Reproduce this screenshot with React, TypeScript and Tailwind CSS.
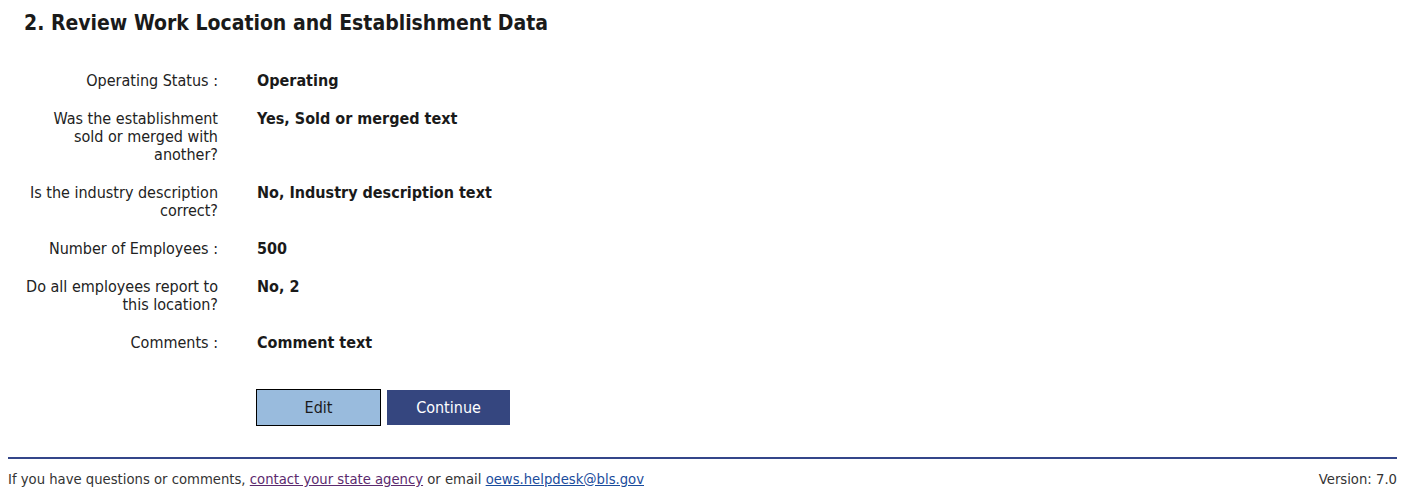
import React from 'react';

const font = { fontFamily: 'Tahoma, "DejaVu Sans Condensed", "Liberation Sans", sans-serif' };

type Row = { label: React.ReactNode; value: string };

const rows: Row[] = [
  { label: 'Operating Status :', value: 'Operating' },
  {
    label: (
      <>
        Was the establishment
        <br />
        sold or merged with
        <br />
        another?
      </>
    ),
    value: 'Yes, Sold or merged text',
  },
  {
    label: (
      <>
        Is the industry description
        <br />
        correct?
      </>
    ),
    value: 'No, Industry description text',
  },
  { label: 'Number of Employees :', value: '500' },
  {
    label: (
      <>
        Do all employees report to
        <br />
        this location?
      </>
    ),
    value: 'No, 2',
  },
  { label: 'Comments :', value: 'Comment text' },
];

const App = () => {
  return (
    <div className="min-h-screen bg-white text-[#222]" style={font}>
      <div className="px-[24px] pt-[11px]">
        <h2 className="text-[21px] leading-[24px] font-bold text-[#1a1a1a]">
          2. Review Work Location and Establishment Data
        </h2>

        <div className="mt-[37px] flex flex-col gap-[20px]">
          {rows.map((r, i) => (
            <div key={i} className="flex text-[16px] leading-[18px]">
              <div className="w-[194px] text-right whitespace-nowrap text-[#222]">{r.label}</div>
              <div className="ml-[39px] font-bold text-[#1a1a1a]">{r.value}</div>
            </div>
          ))}
        </div>

        <div className="mt-[37px] ml-[232px] flex items-center gap-[6px]">
          <button className="w-[125px] h-[37px] bg-[#99bbdd] border border-black text-[16px] text-[#1a1a1a]">
            Edit
          </button>
          <button className="w-[123px] h-[35px] bg-[#35467f] text-[16px] text-white">
            Continue
          </button>
        </div>
      </div>

      <div className="px-2 mt-[31px]">
        <div className="h-[2px] bg-[#34468a]" />
        <div className="flex justify-between items-center text-[14.7px] leading-[16px] pt-[12px] text-[#333]">
          <div>
            If you have questions or comments,{' '}
            <a href="#" className="underline text-[#5b2a6e]">
              contact your state agency
            </a>{' '}
            or email{' '}
            <a href="#" className="underline text-[#1a4c9c]">
              oews.helpdesk@bls.gov
            </a>
          </div>
          <div>Version: 7.0</div>
        </div>
      </div>
    </div>
  );
};

export default App;
